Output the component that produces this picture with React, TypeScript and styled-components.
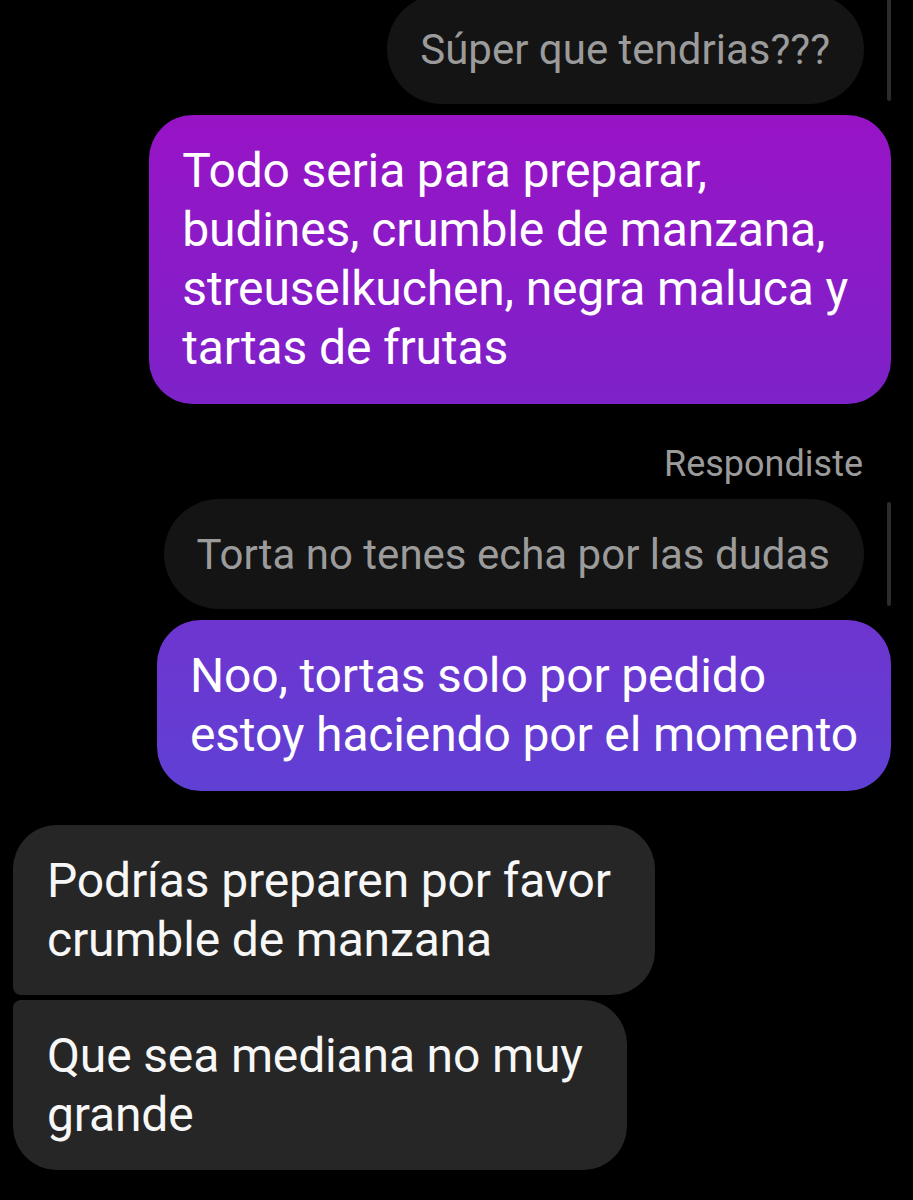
import React from 'react';
import styled, { createGlobalStyle, css } from 'styled-components';

const GlobalStyle = createGlobalStyle`
  * {
    box-sizing: border-box;
  }
  html,
  body {
    margin: 0;
    padding: 0;
    background-color: #000;
  }
  body {
    font-family: Roboto, 'Liberation Sans', sans-serif;
    -webkit-font-smoothing: antialiased;
  }
`;

type Corner = 'first' | 'last' | 'single';

const App = () => {
  return (
    <>
      <GlobalStyle />
      <Thread>
        <SentGroup>
          <ReplyRow $first>
            <Quote>Súper que tendrias???</Quote>
            <ReplyBar />
          </ReplyRow>
          <SentBubble $trail={43}>
            {'Todo seria para preparar,\nbudines, crumble de manzana,\nstreuselkuchen, negra maluca y\ntartas de frutas'}
          </SentBubble>
        </SentGroup>

        <SentGroup>
          <ReplyLabel>Respondiste</ReplyLabel>
          <ReplyRow>
            <Quote>Torta no tenes echa por las dudas</Quote>
            <ReplyBar />
          </ReplyRow>
          <SentBubble>
            {'Noo, tortas solo por pedido\nestoy haciendo por el momento'}
          </SentBubble>
        </SentGroup>

        <ReceivedGroup>
          <ReceivedBubble $corner="first">
            {'Podrías preparen por favor\ncrumble de manzana'}
          </ReceivedBubble>
          <ReceivedBubble $corner="last">
            {'Que sea mediana no muy\ngrande'}
          </ReceivedBubble>
        </ReceivedGroup>
      </Thread>
    </>
  );
};

const Thread = styled.main`
  width: 913px;
  height: 1200px;
  overflow: hidden;
  display: flex;
  flex-direction: column;
`;

const SentGroup = styled.section`
  display: flex;
  flex-direction: column;
  align-items: flex-end;
  padding-right: 22px;
  margin-bottom: 40px;

  & + & {
    margin-bottom: 34px;
  }
`;

const ReplyRow = styled.div<{ $first?: boolean }>`
  display: flex;
  align-items: center;
  gap: 23px;
  margin-bottom: 11px;
  margin-top: ${props => (props.$first ? '-6px' : '0')};
`;

const Quote = styled.p`
  margin: 0;
  height: 110px;
  display: flex;
  align-items: center;
  padding: 0 34px 0 33px;
  border-radius: 55px;
  background-color: #141414;
  color: #9b9b9b;
  font-size: 42px;
  white-space: nowrap;
`;

const ReplyBar = styled.span`
  width: 4px;
  height: 104px;
  border-radius: 2px;
  background-color: #2c2c2c;
`;

const ReplyLabel = styled.span`
  margin: 0 28px 15px 0;
  line-height: 40px;
  font-size: 36px;
  color: #9b9b9b;
`;

const bubbleText = css`
  margin: 0;
  white-space: pre-line;
  font-size: 48px;
  line-height: 59px;
  letter-spacing: -0.15px;
  color: #fff;
`;

const SentBubble = styled.p<{ $trail?: number }>`
  ${bubbleText};
  padding: 26px ${props => props.$trail ?? 33}px 27px 33px;
  border-radius: 44px;
  background-image: linear-gradient(
    180deg,
    #a20dc4 0px,
    #9814c6 116px,
    #7d22c9 405px,
    #6e35d0 621px,
    #6040d4 791px,
    #4c4cd8 1200px
  );
  background-attachment: fixed;
`;

const ReceivedGroup = styled.section`
  display: flex;
  flex-direction: column;
  align-items: flex-start;
  gap: 5px;
  padding-left: 13px;
`;

const cornerRadius: Record<Corner, string> = {
  first: '44px 44px 44px 8px',
  last: '8px 44px 44px 44px',
  single: '44px',
};

const ReceivedBubble = styled.p<{ $corner: Corner }>`
  ${bubbleText};
  padding: 26px 44px 26px 34px;
  border-radius: ${props => cornerRadius[props.$corner]};
  background-color: #262626;
  color: #f7f7f7;
`;

export default App;
